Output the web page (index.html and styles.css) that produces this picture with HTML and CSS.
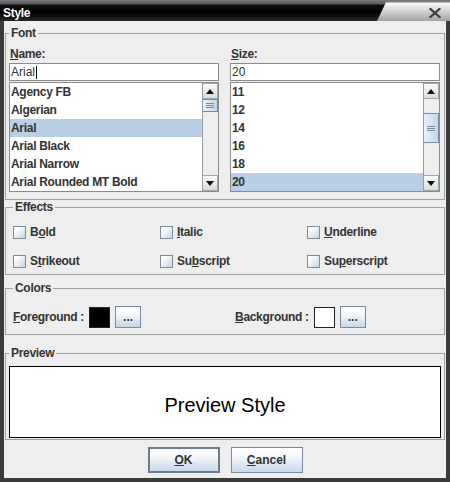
FILE: index.html
```html
<!DOCTYPE html>
<html lang="en">
<head>
    <meta charset="UTF-8">
    <title>Style</title>
    <link rel="stylesheet" href="styles.css">
</head>
<body>
    <div class="window">
        <div class="titlebar">
            <div class="title-tab"><span class="title">Style</span></div>
            <div class="title-rest">
                <svg class="close" width="12" height="10" viewBox="0 0 12 10">
                    <path d="M1.5 1 L10.5 9 M10.5 1 L1.5 9" stroke="#3d3d3d" stroke-width="2.2" stroke-linecap="square"/>
                </svg>
            </div>
        </div>

        <div class="content">
            <fieldset class="group font-group">
                <legend>Font</legend>
                <div class="font-cols">
                    <div class="font-col">
                        <div class="field-label"><u>N</u>ame:</div>
                        <div class="textfield">Arial<span class="caret"></span></div>
                        <div class="list">
                            <ul class="list-items">
                                <li>Agency FB</li>
                                <li>Algerian</li>
                                <li class="selected">Arial</li>
                                <li>Arial Black</li>
                                <li>Arial Narrow</li>
                                <li>Arial Rounded MT Bold</li>
                            </ul>
                            <div class="scrollbar">
                                <div class="sb-btn">
                                    <svg width="8" height="5" viewBox="0 0 8 5"><path d="M0 5 L4 0 L8 5 Z" fill="#111"/></svg>
                                </div>
                                <div class="sb-track">
                                    <div class="sb-thumb thumb-name">
                                        <svg width="8" height="5" viewBox="0 0 8 5"><path d="M0 0.5 H8 M0 2.5 H8 M0 4.5 H8" stroke="#6d8aa8" stroke-width="1"/></svg>
                                    </div>
                                </div>
                                <div class="sb-btn">
                                    <svg width="8" height="5" viewBox="0 0 8 5"><path d="M0 0 L8 0 L4 5 Z" fill="#111"/></svg>
                                </div>
                            </div>
                        </div>
                    </div>

                    <div class="font-col">
                        <div class="field-label"><u>S</u>ize:</div>
                        <div class="textfield">20</div>
                        <div class="list">
                            <ul class="list-items">
                                <li>11</li>
                                <li>12</li>
                                <li>14</li>
                                <li>16</li>
                                <li>18</li>
                                <li class="selected">20</li>
                            </ul>
                            <div class="scrollbar">
                                <div class="sb-btn">
                                    <svg width="8" height="5" viewBox="0 0 8 5"><path d="M0 5 L4 0 L8 5 Z" fill="#111"/></svg>
                                </div>
                                <div class="sb-track">
                                    <div class="sb-thumb thumb-size">
                                        <svg width="8" height="5" viewBox="0 0 8 5"><path d="M0 0.5 H8 M0 2.5 H8 M0 4.5 H8" stroke="#6d8aa8" stroke-width="1"/></svg>
                                    </div>
                                </div>
                                <div class="sb-btn">
                                    <svg width="8" height="5" viewBox="0 0 8 5"><path d="M0 0 L8 0 L4 5 Z" fill="#111"/></svg>
                                </div>
                            </div>
                        </div>
                    </div>
                </div>
            </fieldset>

            <fieldset class="group effects-group">
                <legend>Effects</legend>
                <div class="effects-grid">
                    <label class="check"><span class="box"></span><span>B<u>o</u>ld</span></label>
                    <label class="check"><span class="box"></span><span><u>I</u>talic</span></label>
                    <label class="check"><span class="box"></span><span><u>U</u>nderline</span></label>
                    <label class="check"><span class="box"></span><span>S<u>t</u>rikeout</span></label>
                    <label class="check"><span class="box"></span><span>Su<u>b</u>script</span></label>
                    <label class="check"><span class="box"></span><span>Su<u>p</u>erscript</span></label>
                </div>
            </fieldset>

            <fieldset class="group colors-group">
                <legend>Colors</legend>
                <div class="colors-row">
                    <div class="color-pick">
                        <span class="color-label"><u>F</u>oreground :</span>
                        <span class="swatch swatch-black"></span>
                        <button class="btn small-btn">...</button>
                    </div>
                    <div class="color-pick">
                        <span class="color-label"><u>B</u>ackground :</span>
                        <span class="swatch swatch-white"></span>
                        <button class="btn small-btn">...</button>
                    </div>
                </div>
            </fieldset>

            <fieldset class="group preview-group">
                <legend>Preview</legend>
                <div class="preview-box">Preview Style</div>
            </fieldset>

            <div class="actions">
                <button class="btn action-btn default-btn"><u>O</u>K</button>
                <button class="btn action-btn"><u>C</u>ancel</button>
            </div>
        </div>
    </div>
</body>
</html>
```

FILE: styles.css
```css
* {
    box-sizing: border-box;
    margin: 0;
    padding: 0;
}

body {
    background: #3a3a3a;
    font-family: "Liberation Sans", Arial, sans-serif;
    font-size: 12px;
    color: #333;
}

.window {
    width: 450px;
    height: 482px;
    display: flex;
    flex-direction: column;
}

/* title bar */
.titlebar {
    height: 21px;
    display: flex;
    background: linear-gradient(#7a7a7a 0, #7a7a7a 2px, #fafafa 3px, #e2e2e2 8px, #a2a2a2 21px);
}

.title-tab {
    width: 387px;
    background: linear-gradient(#7c7c7c 0, #5a5a5a 4px, #111 5px, #000 12px, #262626 21px);
    clip-path: polygon(0 0, 100% 0, calc(100% - 10px) 100%, 0 100%);
    padding: 6px 0 0 3px;
}

.title {
    color: #fff;
    font-weight: bold;
    font-size: 12px;
    line-height: 14px;
    letter-spacing: -0.3px;
}

.title-rest {
    flex: 1;
    display: flex;
    justify-content: flex-end;
    align-items: flex-start;
    padding: 8px 9px 0 0;
}

/* dialog body */
.content {
    flex: 1;
    background: #eeeeee;
    border: 4px solid #3a3a3a;
    border-top: none;
    padding: 5px 1px 0;
    display: flex;
    flex-direction: column;
}

.group {
    border: 1px solid #a0a0a0;
}

.group legend {
    font-weight: bold;
    line-height: 14px;
    padding: 0 2px;
    letter-spacing: -0.3px;
}

.font-group {
    padding: 7px 4px 7px 3px;
}

.font-cols {
    display: grid;
    grid-template-columns: 210px 210px;
    column-gap: 11px;
}

.field-label {
    font-weight: bold;
    line-height: 14px;
    padding-left: 1px;
    margin-bottom: 2px;
    letter-spacing: -0.3px;
}

.textfield {
    height: 18px;
    background: #fff;
    border: 1px solid #8c8c8c;
    padding-left: 1px;
    line-height: 16px;
    color: #333;
    display: flex;
    align-items: center;
}

.caret {
    display: inline-block;
    width: 1px;
    height: 13px;
    background: #000;
    margin-left: 1px;
}

.list {
    margin-top: 1px;
    height: 110px;
    border: 1px solid #8c8c8c;
    background: #fff;
    display: flex;
}

.list-items {
    flex: 1;
    list-style: none;
}

.list-items li {
    height: 18px;
    line-height: 18px;
    padding-left: 1px;
    font-weight: bold;
    letter-spacing: -0.3px;
    color: #333;
}

.list-items li.selected {
    background: #b8cfe5;
}

.scrollbar {
    width: 16px;
    border-left: 1px solid #999;
    background: #eee;
    display: flex;
    flex-direction: column;
}

.sb-btn {
    height: 16px;
    display: flex;
    align-items: center;
    justify-content: center;
    background: linear-gradient(#fafafa, #dcdcdc);
    border: 1px solid #9aa;
    border-left: none;
}

.sb-track {
    flex: 1;
}

.sb-thumb {
    height: 13px;
    display: flex;
    align-items: center;
    justify-content: center;
    background: linear-gradient(90deg, #e9f1fa, #c3d6ea);
    border: 1px solid #7a8a99;
    border-left: none;
}

.thumb-size {
    margin-top: 14px;
    height: 30px;
}

/* effects */
.effects-group {
    padding: 9px 4px 4px 7px;
}

.effects-grid {
    display: grid;
    grid-template-columns: 147px 147px auto;
    row-gap: 11px;
}

.check {
    height: 18px;
    display: flex;
    align-items: center;
    gap: 4px;
    font-weight: bold;
    letter-spacing: -0.3px;
}

.box {
    width: 13px;
    height: 13px;
    border: 1px solid #7f8c98;
    background: linear-gradient(135deg, #ffffff 20%, #c4d3e2);
}

/* colors */
.colors-group {
    margin-top: 6px;
    padding: 11px 4px 6px 7px;
}

.colors-row {
    display: grid;
    grid-template-columns: 222px auto;
}

.color-pick {
    display: flex;
    align-items: center;
    height: 22px;
    gap: 5px;
}

.color-label {
    font-weight: bold;
    letter-spacing: -0.3px;
}

.swatch {
    width: 21px;
    height: 21px;
    border: 1px solid #222;
}

.swatch-black {
    background: #000;
}

.swatch-white {
    background: #fff;
}

.btn {
    font-family: "Liberation Sans", Arial, sans-serif;
    font-size: 12px;
    font-weight: bold;
    color: #333;
    border: 1px solid #7a8a99;
    background: linear-gradient(#ffffff, #f2f6fa 40%, #c6d8ea);
}

.small-btn {
    width: 26px;
    height: 22px;
    line-height: 14px;
}

/* preview */
.preview-group {
    margin-top: 11px;
    padding: 6px 3px 1px 3px;
}

.preview-box {
    height: 72px;
    background: #fff;
    border: 1px solid #000;
    display: flex;
    align-items: center;
    justify-content: center;
    padding-top: 6px;
    font-family: "Liberation Sans", Arial, sans-serif;
    font-size: 20px;
    color: #000;
}

/* buttons */
.actions {
    margin-top: 7px;
    display: flex;
    justify-content: center;
    gap: 11px;
}

.action-btn {
    width: 72px;
    height: 26px;
}

.default-btn {
    border: 2px solid #6f7d8a;
}
```
